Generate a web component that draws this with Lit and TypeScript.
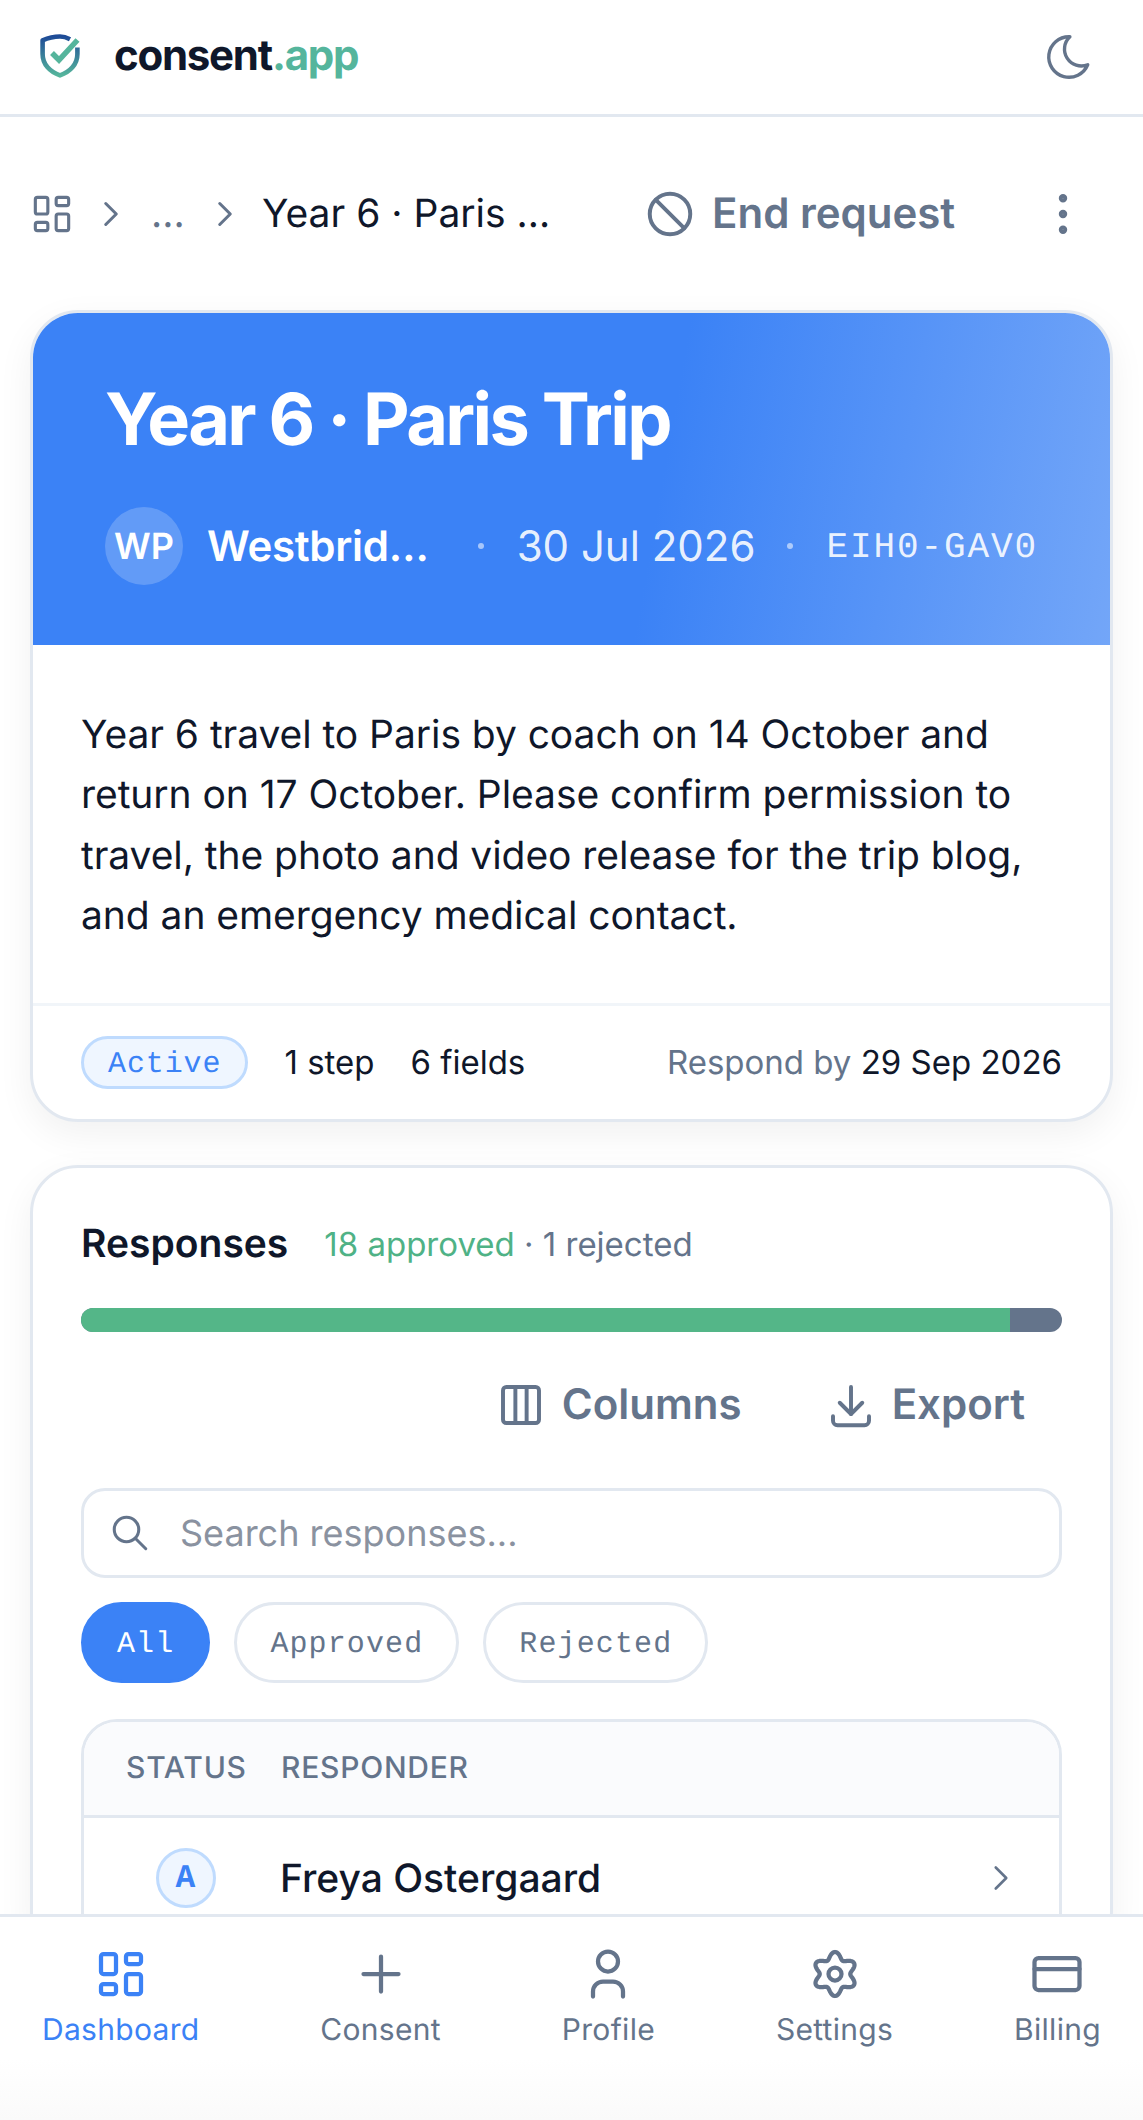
import { LitElement, html, css, svg } from "lit";
import { customElement } from "lit/decorators.js";

const gearPath = (() => {
  const pts: string[] = [];
  const n = 144;
  for (let i = 0; i <= n; i++) {
    const t = (i / n) * Math.PI * 2;
    const r = 7.45 + 1.35 * Math.cos(6 * t);
    const x = 12 + r * Math.sin(t);
    const y = 12 - r * Math.cos(t);
    pts.push(`${i ? "L" : "M"}${x.toFixed(2)} ${y.toFixed(2)}`);
  }
  return pts.join("") + "Z";
})();

const ic = (size: number, sw: number, body: unknown) => html`<svg
  class="icon"
  width=${size}
  height=${size}
  viewBox="0 0 24 24"
  fill="none"
  stroke="currentColor"
  stroke-width=${sw}
  stroke-linecap="round"
  stroke-linejoin="round"
>${body}</svg>`;

const dashboard = svg`<path d="M5 4h4a1 1 0 0 1 1 1v6a1 1 0 0 1 -1 1h-4a1 1 0 0 1 -1 -1v-6a1 1 0 0 1 1 -1"/><path d="M5 16h4a1 1 0 0 1 1 1v2a1 1 0 0 1 -1 1h-4a1 1 0 0 1 -1 -1v-2a1 1 0 0 1 1 -1"/><path d="M15 12h4a1 1 0 0 1 1 1v6a1 1 0 0 1 -1 1h-4a1 1 0 0 1 -1 -1v-6a1 1 0 0 1 1 -1"/><path d="M15 4h4a1 1 0 0 1 1 1v2a1 1 0 0 1 -1 1h-4a1 1 0 0 1 -1 -1v-2a1 1 0 0 1 1 -1"/>`;
const chevron = svg`<path d="M9 6l6 6l-6 6"/>`;

@customElement("app-root")
export class AppRoot extends LitElement {
  static styles = css`
    :host {
      display: flex;
      flex-direction: column;
      height: 2120px;
      overflow: hidden;
      background: #fff;
      font-family: Inter, "Liberation Sans", sans-serif;
      color: #0f172a;
      text-rendering: geometricPrecision;
    }
    * { box-sizing: border-box; }
    .icon { display: block; flex: none; }
    .top {
      flex: none;
      height: 117px;
      border-bottom: 3px solid #e2e8f0;
      display: flex;
      align-items: center;
      justify-content: space-between;
      padding: 0 24px 0 40px;
      color: #64748b;
    }
    .brand { display: flex; align-items: center; gap: 34px; }
    .logo { margin-top: -3px; }
    .wordmark { font-size: 42px; font-weight: 700; letter-spacing: -1.26px; line-height: 60px; color: #0f172a; margin-top: -2px; }
    .wordmark span { color: #55b59c; }
    .moon { margin-right: 23px; }
    main { flex: 1; min-height: 0; overflow: hidden; padding: 0 30px; }
    .crumbs { display: flex; align-items: center; height: 193px; color: #64748b; }
    .crumbs .home { margin-left: -3px; }
    .chev1 { margin-left: 13px; }
    .dots { width: 29px; margin-left: 19px; font-size: 39px; line-height: 60px; }
    .chev2 { margin-left: 24px; }
    .crumb-now {
      width: 292px;
      margin-left: 16px;
      font-size: 39px;
      line-height: 60px;
      white-space: nowrap;
      overflow: hidden;
      text-overflow: ellipsis;
      color: #0f172a;
    }
    .end { display: flex; align-items: center; gap: 15px; margin-left: 89px; font-size: 42px; font-weight: 600; }
    .kebab { margin-left: 81px; }
    .card {
      border: 3px solid #e2e8f0;
      border-radius: 48px;
      background: #fff;
      overflow: hidden;
      box-shadow: 0 12px 36px rgba(0, 0, 0, 0.06);
    }
    .hero {
      height: 332px;
      padding: 62px 72px 0;
      background: linear-gradient(100deg, #3b82f6 58%, #73a6f8 100%);
      color: #fff;
    }
    h1 { margin: 0; font-size: 72px; line-height: 90px; font-weight: 700; letter-spacing: -2.6px; }
    .meta { display: flex; align-items: center; margin-top: 42px; height: 78px; }
    .avatar {
      flex: none;
      width: 78px;
      height: 78px;
      border-radius: 50%;
      background: rgba(255, 255, 255, 0.2);
      display: grid;
      place-items: center;
      font-size: 36px;
      font-weight: 600;
    }
    .org {
      flex: 1;
      min-width: 0;
      margin-left: 24px;
      font-size: 42px;
      font-weight: 600;
      letter-spacing: -0.3px;
      white-space: nowrap;
      overflow: hidden;
      text-overflow: ellipsis;
    }
    .sep { flex: none; width: 6px; height: 6px; border-radius: 50%; background: rgba(255, 255, 255, 0.55); }
    .sep.a { margin: 0 33px 0 39px; }
    .sep.b { margin: 0 33px 0 32px; }
    .date { flex: none; font-size: 42px; color: rgba(255, 255, 255, 0.9); }
    .code { flex: none; padding-top: 2px; font-family: "Liberation Mono", monospace; font-size: 36px; letter-spacing: 1.9px; color: rgba(255, 255, 255, 0.9); }
    .desc { margin: 0; padding: 60px 48px 56px; font-size: 39px; line-height: 60.45px; letter-spacing: -0.06px; color: #0f172a; }
    .foot {
      display: flex;
      align-items: center;
      gap: 36px;
      padding: 30px 48px;
      border-top: 3px solid #f1f5f9;
      font-size: 33px;
    }
    .pill {
      height: 53px;
      padding: 6px 24px 0;
      border: 3px solid #bfdbfe;
      border-radius: 27px;
      background: #eff6ff;
      color: #3b82f6;
      display: flex;
      align-items: center;
      font-family: "Liberation Mono", monospace;
      font-size: 30px;
      letter-spacing: 0.9px;
      font-weight: 500;
    }
    .respond { margin-left: auto; color: #64748b; white-space: nowrap; }
    .respond b { font-weight: 400; color: #0f172a; }
    .card2 { margin-top: 43px; padding: 0 48px; }
    .resp-head { display: flex; align-items: center; gap: 36px; height: 60px; margin-top: 46px; }
    .resp-head h2 { margin: 0; font-size: 39px; font-weight: 600; }
    .resp-sub { font-size: 33px; color: #64748b; }
    .resp-sub .ok { color: #4fb286; }
    .bar { display: flex; height: 24px; border-radius: 12px; overflow: hidden; margin-top: 34px; background: #64748b; }
    .bar i { display: block; height: 100%; background: #54b688; }
    .tools { display: flex; justify-content: flex-end; gap: 9px; height: 78px; margin-top: 34px; }
    .tool { display: flex; align-items: center; gap: 14px; padding: 0 37px 0 36px; font-size: 42px; font-weight: 600; color: #64748b; }
    .search {
      display: flex;
      align-items: center;
      height: 90px;
      margin-top: 44px;
      border: 3px solid #e2e8f0;
      border-radius: 24px;
      padding-left: 25px;
      font-size: 36px;
      color: #8a92a0;
    }
    .search .icon { color: #64748b; margin-right: 29px; }
    .chips { display: flex; gap: 24px; margin-top: 24px; }
    .chip {
      height: 81px;
      padding: 6px 33px 0;
      border: 3px solid #e2e8f0;
      border-radius: 41px;
      display: flex;
      align-items: center;
      font-family: "Liberation Mono", monospace;
      font-size: 30px;
      letter-spacing: 1.12px;
      color: #64748b;
    }
    .chip.on { background: #3b82f6; border-color: #3b82f6; color: #fff; }
    .table { margin-top: 36px; border: 3px solid #e2e8f0; border-radius: 36px; overflow: hidden; }
    .thead {
      display: grid;
      grid-template-columns: 155px 1fr;
      align-items: center;
      height: 96px;
      background: #fafbfd;
      border-bottom: 3px solid #e2e8f0;
      font-size: 30px;
      font-weight: 500;
      letter-spacing: 0.75px;
      color: #64748b;
      padding-left: 42px;
    }
    .trow { display: grid; grid-template-columns: 196px 1fr 79px; align-items: center; height: 135px; padding-bottom: 14px; font-size: 39px; font-weight: 500; }
    .status { display: flex; justify-content: center; padding-left: 7px; }
    .ava {
      width: 60px;
      height: 60px;
      border-radius: 50%;
      border: 3px solid #bfdbfe;
      background: #eff6ff;
      color: #3b82f6;
      display: grid;
      place-items: center;
      font-family: "Liberation Mono", monospace;
      font-size: 33px;
      font-weight: 700;
    }
    .trow .icon { color: #64748b; }
    nav {
      flex: none;
      height: 206px;
      border-top: 3px solid #e2e8f0;
      background: linear-gradient(180deg, #fff 70%, #fafafa 100%);
      display: flex;
      justify-content: space-between;
      padding: 27px 42px 0;
      color: #64748b;
    }
    .item { display: flex; flex-direction: column; align-items: center; font-size: 30px; letter-spacing: 0.3px; line-height: 42px; }
    .item.on { color: #3b82f6; }
    .item span { margin-top: 5px; }
  `;

  render() {
    return html`
      <header class="top">
        <div class="brand">
          <svg class="icon logo" width="40" height="44" viewBox="0 0 40 44" fill="none">
            <defs>
              <linearGradient id="sh" x1="0" y1="0" x2="0" y2="1">
                <stop offset="0" stop-color="#1e4b97" />
                <stop offset="1" stop-color="#55b59c" />
              </linearGradient>
            </defs>
            <path d="M30 5.2C26.5 3.4 23.5 2.5 20 2.5C14 2.5 8 4 2.6 6.4V20C2.6 30.5 10 38 20 41.4C30 38 37.4 30.5 37.4 20V13.5" stroke="url(#sh)" stroke-width="4.6" stroke-linejoin="round" />
            <path d="M12 19L19 26L37.5 6" stroke="#55b59c" stroke-width="5.5" />
          </svg>
          <div class="wordmark">consent<span>.app</span></div>
        </div>
        <div class="moon">${ic(54, 1.5, svg`<path d="M12 3c.132 0 .263 0 .393 0a7.5 7.5 0 0 0 7.92 12.446a9 9 0 1 1 -8.313 -12.454z"/>`)}</div>
      </header>
      <main>
        <div class="crumbs">
          <div class="home">${ic(50, 1.5, dashboard)}</div>
          <div class="chev1">${ic(42, 1.75, chevron)}</div>
          <div class="dots">...</div>
          <div class="chev2">${ic(42, 1.75, chevron)}</div>
          <div class="crumb-now">Year 6 · Paris Trip</div>
          <div class="end">
            ${ic(54, 1.75, svg`<circle cx="12" cy="12" r="9"/><path d="M5.7 5.7l12.6 12.6"/>`)}
            End request
          </div>
          <div class="kebab">${ic(54, 1.75, svg`<circle cx="12" cy="5" r="1"/><circle cx="12" cy="12" r="1"/><circle cx="12" cy="19" r="1"/>`)}</div>
        </div>

        <section class="card">
          <div class="hero">
            <h1>Year 6 · Paris Trip</h1>
            <div class="meta">
              <div class="avatar">WP</div>
              <div class="org">Westbridge Primary School</div>
              <i class="sep a"></i>
              <div class="date">30 Jul 2026</div>
              <i class="sep b"></i>
              <div class="code">EIH0-GAV0</div>
            </div>
          </div>
          <p class="desc">Year 6 travel to Paris by coach on 14 October and return on 17 October. Please confirm permission to travel, the photo and video release for the trip blog, and an emergency medical contact.</p>
          <div class="foot">
            <div class="pill">Active</div>
            <div>1 step</div>
            <div>6 fields</div>
            <div class="respond">Respond by <b>29 Sep 2026</b></div>
          </div>
        </section>

        <section class="card card2">
          <div class="resp-head">
            <h2>Responses</h2>
            <div class="resp-sub"><span class="ok">18 approved</span> · 1 rejected</div>
          </div>
          <div class="bar"><i style="width:${(18 / 19) * 100}%"></i></div>
          <div class="tools">
            <div class="tool">
              ${ic(54, 1.75, svg`<rect x="4" y="4" width="16" height="16" rx="1.5"/><path d="M9.5 4v16M14.5 4v16"/>`)}
              Columns
            </div>
            <div class="tool">
              ${ic(54, 1.75, svg`<path d="M4 17v2a2 2 0 0 0 2 2h12a2 2 0 0 0 2 -2v-2"/><path d="M7 11l5 5l5 -5"/><path d="M12 4v12"/>`)}
              Export
            </div>
          </div>
          <div class="search">
            ${ic(42, 1.75, svg`<circle cx="10" cy="10" r="7"/><path d="M21 21l-6 -6"/>`)}
            Search responses...
          </div>
          <div class="chips">
            <div class="chip on">All</div>
            <div class="chip">Approved</div>
            <div class="chip">Rejected</div>
          </div>
          <div class="table">
            <div class="thead"><div>STATUS</div><div>RESPONDER</div></div>
            <div class="trow">
              <div class="status"><div class="ava">A</div></div>
              <div>Freya Ostergaard</div>
              ${ic(42, 1.5, chevron)}
            </div>
          </div>
        </section>
      </main>
      <nav>
        <div class="item on">${ic(60, 1.7, dashboard)}<span>Dashboard</span></div>
        <div class="item">${ic(60, 1.7, svg`<path d="M12 5v14M5 12h14"/>`)}<span>Consent</span></div>
        <div class="item">${ic(60, 1.7, svg`<circle cx="12" cy="7" r="4"/><path d="M6 21v-2a4 4 0 0 1 4 -4h4a4 4 0 0 1 4 4v2"/>`)}<span>Profile</span></div>
        <div class="item">${ic(60, 1.7, svg`<path d=${gearPath}/><circle cx="12" cy="12" r="2.6"/>`)}<span>Settings</span></div>
        <div class="item">${ic(60, 1.7, svg`<rect x="3" y="5.6" width="18" height="12.8" rx="1.6"/><path d="M3 10h18"/>`)}<span>Billing</span></div>
      </nav>
    `;
  }
}
